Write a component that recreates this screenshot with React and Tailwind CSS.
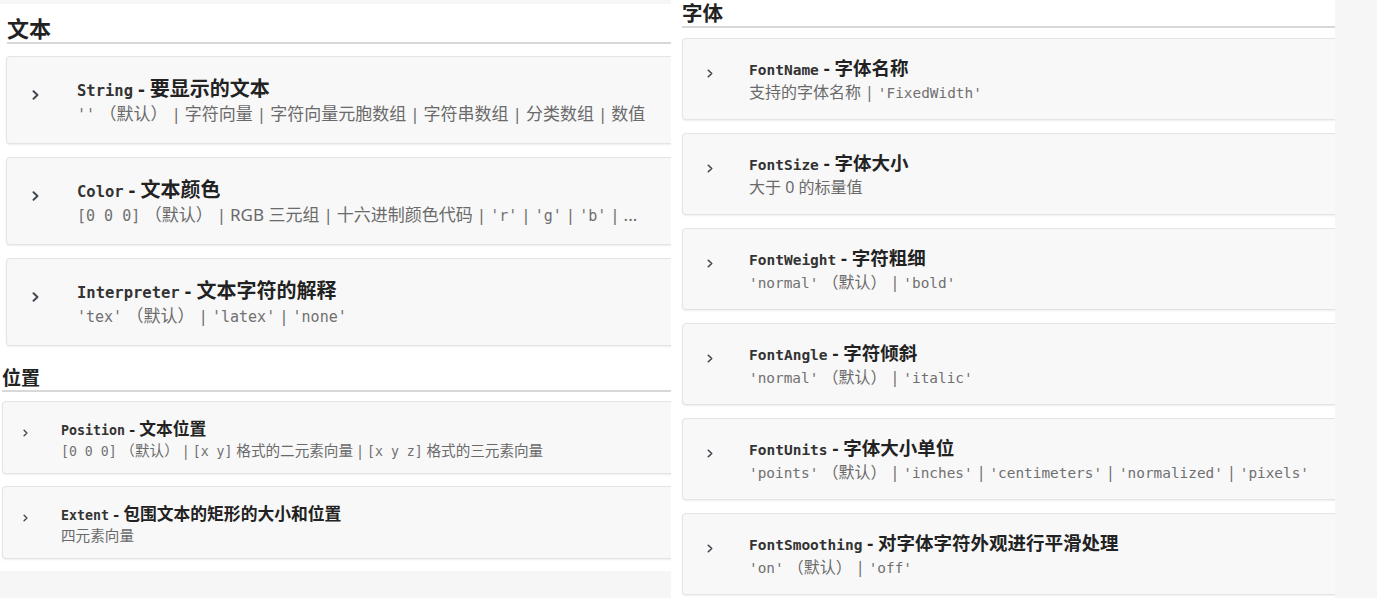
const SANS = "font-['Noto_Sans','Noto_Sans_CJK_SC',sans-serif]";
const MONO = "font-['DejaVu_Sans_Mono','Noto_Sans_CJK_SC',monospace]";

// size presets for the three panels (they were captured at different zoom levels)
const SIZES = {
  lg: {
    card: 'h-[88px] pl-[25px] pt-[20px]',
    chevBox: 'w-[45px] pt-[13px]',
    chev: 'w-[7px] h-[10px]',
    line: 'h-[24px] leading-[24px]',
    name: 'text-[15.5px]',
    title: 'text-[20px]',
    desc: 'h-[26px] text-[17px] leading-[26px]',
    descMono: 'text-[15px]',
    pipe: 'mx-[4px]',
  },
  sm: {
    card: 'h-[73px] pl-[20px] pt-[17px]',
    chevBox: 'w-[38px] pt-[10px]',
    chev: 'w-[5px] h-[8px]',
    line: 'h-[20px] leading-[20px]',
    name: 'text-[13.3px]',
    title: 'text-[16.8px]',
    desc: 'h-[22px] text-[14.6px] leading-[22px]',
    descMono: 'text-[13.2px]',
    pipe: 'mx-[3px]',
  },
  md: {
    card: 'h-[82px] pl-[24px] pt-[18px]',
    chevBox: 'w-[42px] pt-[12px]',
    chev: 'w-[6px] h-[9px]',
    line: 'h-[22px] leading-[22px]',
    name: 'text-[14.5px]',
    title: 'text-[18.5px]',
    desc: 'h-[26px] text-[16px] leading-[26px]',
    descMono: 'text-[14.4px]',
    pipe: 'mx-[4px]',
  },
};

function Chevron({ className }) {
  return (
    <svg viewBox="0 0 7 10" className={className} fill="none">
      <path d="M1.5 1.2 L5.5 5 L1.5 8.8" stroke="#3f4650" strokeWidth="1.9" strokeLinecap="round" strokeLinejoin="round" />
    </svg>
  );
}

// plain text parts use "|" as separator, rendered with fixed side spacing
function Plain({ text, pipe }) {
  const bits = text.split('|');
  return bits.map((b, i) => (
    <span key={i}>
      {i > 0 && <span className={pipe}>|</span>}
      {b}
    </span>
  ));
}

function PropCard({ size, name, title, desc }) {
  const s = SIZES[size];
  return (
    <div className={`flex w-[720px] shrink-0 bg-[#f8f8f8] border border-[#e4e4e4] rounded-[4px] shadow-[0_1px_2px_rgba(0,0,0,0.07)] ${s.card}`}>
      <div className={`shrink-0 ${s.chevBox}`}>
        <Chevron className={s.chev} />
      </div>
      <div className="min-w-0 flex flex-col">
        <div className={`${s.line} whitespace-nowrap`}>
          <span className={`${MONO} ${s.name} text-[#333] font-bold`}>{name}</span>
          <span className={`${SANS} ${s.title} text-[#222] font-bold`}> - {title}</span>
        </div>
        <div className={`${SANS} ${s.desc} text-[#6a6a6a] whitespace-nowrap`}>
          {desc.map((part, i) =>
            typeof part === 'string' ? (
              <Plain key={i} text={part} pipe={s.pipe} />
            ) : (
              <span key={i} className={`${MONO} ${s.descMono} text-[#707070]`}>{part.m}</span>
            )
          )}
        </div>
      </div>
    </div>
  );
}

const m = (t) => ({ m: t });

const TEXT_PROPS = [
  { name: 'String', title: '要显示的文本', desc: [m("''"), ' （默认）|字符向量|字符向量元胞数组|字符串数组|分类数组|数值'] },
  { name: 'Color', title: '文本颜色', desc: [m('[0 0 0]'), ' （默认）|RGB 三元组|十六进制颜色代码|', m("'r'"), '|', m("'g'"), '|', m("'b'"), '|...'] },
  { name: 'Interpreter', title: '文本字符的解释', desc: [m("'tex'"), ' （默认）|', m("'latex'"), '|', m("'none'")] },
];

const POS_PROPS = [
  { name: 'Position', title: '文本位置', desc: [m('[0 0 0]'), ' （默认）|', m('[x y]'), ' 格式的二元素向量|', m('[x y z]'), ' 格式的三元素向量'] },
  { name: 'Extent', title: '包围文本的矩形的大小和位置', desc: ['四元素向量'] },
];

const FONT_PROPS = [
  { name: 'FontName', title: '字体名称', desc: ['支持的字体名称|', m("'FixedWidth'")] },
  { name: 'FontSize', title: '字体大小', desc: ['大于 0 的标量值'] },
  { name: 'FontWeight', title: '字符粗细', desc: [m("'normal'"), ' （默认）|', m("'bold'")] },
  { name: 'FontAngle', title: '字符倾斜', desc: [m("'normal'"), ' （默认）|', m("'italic'")] },
  { name: 'FontUnits', title: '字体大小单位', desc: [m("'points'"), ' （默认）|', m("'inches'"), '|', m("'centimeters'"), '|', m("'normalized'"), '|', m("'pixels'")] },
  { name: 'FontSmoothing', title: '对字体字符外观进行平滑处理', desc: [m("'on'"), ' （默认）|', m("'off'")] },
];

export default function App() {
  return (
    <div className="flex w-[1377px] h-[598px] bg-white overflow-hidden">
      {/* left column: 文本 + 位置 */}
      <div className="w-[671px] shrink-0 flex flex-col">
        <div className="h-[4px] bg-[#f6f6f6]" />

        <section className="h-[351px] pt-[10px] overflow-hidden">
          <h2 className={`${SANS} ml-[7px] h-[30px] leading-[28px] text-[22px] font-bold text-[#222] border-b-2 border-[#d8d8d8]`}>文本</h2>
          <div className="ml-[6px] mt-[12px] flex flex-col gap-[13px]">
            {TEXT_PROPS.map((p) => <PropCard key={p.name} size="lg" {...p} />)}
          </div>
        </section>

        <section className="h-[216px] pt-[11px] overflow-hidden">
          <h2 className={`${SANS} ml-[2px] h-[26px] leading-[24px] text-[19px] font-bold text-[#222] border-b-2 border-[#d8d8d8]`}>位置</h2>
          <div className="ml-[2px] mt-[9px] flex flex-col gap-[12px]">
            {POS_PROPS.map((p) => <PropCard key={p.name} size="sm" {...p} />)}
          </div>
        </section>

        <div className="flex-1 bg-[#f6f6f6]" />
      </div>

      {/* right column: 字体 */}
      <section className="w-[655px] shrink-0 ml-[9px] pl-[2px] overflow-hidden">
        <h2 className={`${SANS} h-[28px] leading-[26px] text-[20.5px] font-bold text-[#222] border-b-2 border-[#d8d8d8]`}>字体</h2>
        <div className="mt-[10px] flex flex-col gap-[13px]">
          {FONT_PROPS.map((p) => <PropCard key={p.name} size="md" {...p} />)}
        </div>
      </section>

      <div className="flex-1 bg-[#f6f6f6]" />
    </div>
  );
}
